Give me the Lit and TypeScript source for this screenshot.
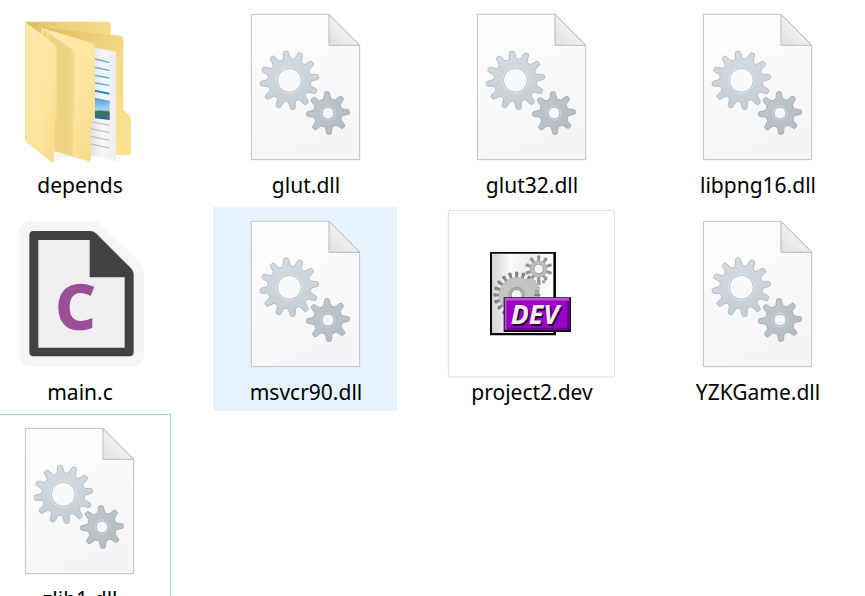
import { LitElement, html, css } from "lit";
import { customElement, property } from "lit/decorators.js";

type Kind = "folder" | "dll" | "c" | "dev";
type Mark = "" | "hover" | "focus";
interface Entry {
  name: string;
  kind: Kind;
  mark?: Mark;
}

const FILES: Entry[] = [
  { name: "depends", kind: "folder" },
  { name: "glut.dll", kind: "dll" },
  { name: "glut32.dll", kind: "dll" },
  { name: "libpng16.dll", kind: "dll" },
  { name: "main.c", kind: "c" },
  { name: "msvcr90.dll", kind: "dll", mark: "hover" },
  { name: "project2.dev", kind: "dev" },
  { name: "YZKGame.dll", kind: "dll" },
  { name: "zlib1.dll", kind: "dll", mark: "focus" },
];

/** Outline of a cog wheel with tapered teeth and a round hole. */
function gear(
  cx: number, cy: number, outer: number, root: number, hole: number,
  teeth: number, start: number, tip = 0.11, base = 0.29,
): string {
  const step = (2 * Math.PI) / teeth;
  const at = (r: number, a: number) =>
    `${(cx + r * Math.cos(a)).toFixed(1)} ${(cy + r * Math.sin(a)).toFixed(1)}`;
  let d = "";
  for (let i = 0; i < teeth; i++) {
    const a = (start * Math.PI) / 180 + i * step;
    d += `${i ? "L" : "M"}${at(root, a - base * step)}`;
    d += `L${at(outer - 4, a - tip * step * 1.3)}`;
    d += `Q${at(outer + 2, a - tip * step)} ${at(outer, a)}`;
    d += `Q${at(outer + 2, a + tip * step)} ${at(outer - 4, a + tip * step * 1.3)}`;
    d += `L${at(root, a + base * step)}`;
    d += `Q${at(root - 4, a + step / 2)} ${at(root, a + (1 - base) * step)}`;
  }
  return `${d}ZM${cx - hole} ${cy}a${hole} ${hole} 0 1 0 ${2 * hole} 0a${hole} ${hole} 0 1 0 ${-2 * hole} 0Z`;
}

const dllIcon = html`<svg viewBox="33 9 504 504" aria-hidden="true">
  <defs>
    <linearGradient id="page" x1="0" y1="0" x2="0.3" y2="1">
      <stop offset="0" stop-color="#fefefe" /><stop offset="1" stop-color="#f4f5f7" />
    </linearGradient>
    <linearGradient id="fold" x1="0" y1="0.8" x2="0.6" y2="0.2">
      <stop offset="0" stop-color="#e2e2e2" /><stop offset="1" stop-color="#f7f7f7" />
    </linearGradient>
    <linearGradient id="big" x1="0.5" y1="0" x2="0.6" y2="1">
      <stop offset="0" stop-color="#d2dbe2" /><stop offset="1" stop-color="#c5ced6" />
    </linearGradient>
    <linearGradient id="small" x1="0" y1="0" x2="1" y2="1">
      <stop offset="0" stop-color="#c1cad1" /><stop offset="1" stop-color="#b0babf" />
    </linearGradient>
  </defs>
  <path d="M124 43H357L449 135V479H124Z" fill="url(#page)" stroke="#c0c1c2" stroke-width="3" />
  <path d="M357 43V136H449Z" fill="url(#fold)" stroke="#b9babb" stroke-width="3" stroke-linejoin="round" />
  <path d=${gear(238, 241, 88, 66, 36, 12, -97, 0.13, 0.3)} fill="url(#big)" fill-rule="evenodd" stroke="#b4bdc4" stroke-width="3" stroke-linejoin="round" />
  <circle cx="238" cy="241" r="39" fill="none" stroke="#e1e7ec" stroke-width="3" />
  <path d=${gear(354, 339, 64, 45, 18, 8, -93, 0.12, 0.28)} fill="url(#small)" fill-rule="evenodd" stroke="#a5b0b6" stroke-width="3" stroke-linejoin="round" />
  <circle cx="354" cy="339" r="21" fill="none" stroke="#d2d9dd" stroke-width="3" />
</svg>`;

const folderIcon = html`<svg viewBox="-15 9 504 504" aria-hidden="true">
  <defs>
    <linearGradient id="back" x1="0" y1="0" x2="1" y2="0.3">
      <stop offset="0" stop-color="#dfbc5e" /><stop offset="0.4" stop-color="#ecd07a" /><stop offset="1" stop-color="#f6dc8a" />
    </linearGradient>
    <linearGradient id="right" x1="0" y1="0" x2="0.8" y2="1">
      <stop offset="0" stop-color="#dfbc5e" /><stop offset="0.5" stop-color="#f3d884" /><stop offset="1" stop-color="#fbe190" />
    </linearGradient>
    <linearGradient id="front" x1="0" y1="0" x2="1" y2="1">
      <stop offset="0" stop-color="#ffeaab" /><stop offset="0.6" stop-color="#fde59f" /><stop offset="1" stop-color="#f8da86" />
    </linearGradient>
    <linearGradient id="shade" x1="0" y1="0" x2="1" y2="0">
      <stop offset="0" stop-color="#ecd27f" /><stop offset="0.85" stop-color="#eed485" /><stop offset="1" stop-color="#f5dd92" />
    </linearGradient>
    <linearGradient id="paper" x1="0" y1="0" x2="1" y2="0">
      <stop offset="0" stop-color="#dedfe2" /><stop offset="0.5" stop-color="#f7f7f8" /><stop offset="1" stop-color="#ededef" />
    </linearGradient>
    <linearGradient id="photo" x1="0" y1="0" x2="0" y2="1">
      <stop offset="0" stop-color="#4d9cd9" /><stop offset="0.55" stop-color="#a9d7ee" /><stop offset="0.65" stop-color="#336b63" /><stop offset="0.8" stop-color="#3f7683" /><stop offset="1" stop-color="#216391" />
    </linearGradient>
  </defs>
  <path d="M76 65H326Q332 65 332 71V200H100Z" fill="url(#back)" />
  <path d="M122 82L363 108Q370 109 370 116V330L388 345Q393 350 393 357V459Q393 467 385 466L270 462Z" fill="url(#right)" />
  <path d="M285 143L348 155V484L270 466Z" fill="url(#paper)" />
  <g fill="none" stroke="#55a9db" stroke-width="4">
    <path d="M285 177L328 187M285 202L328 211M285 226L328 234M285 249L328 256" />
    <path d="M285 272L328 281" stroke-width="6" stroke="#258bc9" />
  </g>
  <path d="M284 293L329 302V360L284 355Z" fill="url(#photo)" />
  <path d="M284 336Q300 325 329 341V348L284 348Z" fill="#3c7165" />
  <path d="M278 366L328 376M274 386L328 398M272 409L328 421M272 432L328 444" fill="none" stroke="#b4b5b8" stroke-width="3" />
  <path d="M163 458L212 468L163 482Z" fill="#f3f3f5" />
  <path d="M121 82L276 129Q285 132 285 141V348Q285 356 278 360Q272 364 272 372V478Q272 486 264 484L163 454V140Z" fill="url(#front)" />
  <path d="M121 82L211 145Q224 153 224 165V340Q224 348 219 354V470L163 454V140Z" fill="url(#shade)" />
  <path d="M123 84L132 87V112L123 106ZM137 90L147 94V122L137 115Z" fill="#f8df90" />
  <path d="M75 65L160 130Q170 138 170 149V356Q170 363 165 368Q162 372 162 380V482Q162 491 154 486L78 426Q75 423 75 418Z" fill="url(#front)" />
  <path d="M77 67V420M88 80V430" fill="none" stroke="#f6dc90" stroke-width="2" />
</svg>`;

const cIcon = html`<svg viewBox="-15 15 504 504" aria-hidden="true">
  <path d="M100 47H274Q291 47 303 59L420 171Q432 183 432 200V443Q432 486 389 486H100Q57 486 57 443V90Q57 47 100 47Z" fill="#f5f5f5" />
  <path d="M101 78H270Q281 78 288 85L393 190Q401 198 401 207V441Q401 454 388 454H101Q88 454 88 441V91Q88 78 101 78Z" fill="#424242" />
  <path d="M115 105H269V217H374V428H115Z" fill="#efeef1" />
  <text class="letter" x="167" y="373">C</text>
</svg>`;

const devIcon = html`<svg viewBox="21 15 504 504" aria-hidden="true">
  <defs>
    <linearGradient id="sheet" x1="0" y1="0" x2="1" y2="0">
      <stop offset="0" stop-color="#d4d4d4" /><stop offset="0.3" stop-color="#fafafa" /><stop offset="0.6" stop-color="#ececec" /><stop offset="1" stop-color="#ffffff" />
    </linearGradient>
    <clipPath id="inside"><path d="M156 147H342V386H156Z" /></clipPath>
  </defs>
  <rect x="25" y="16" width="499" height="500" rx="8" fill="#fff" stroke="#dedede" stroke-width="3" />
  <path d="M150 141H348V391H150Z" fill="#0a0a0a" />
  <path d="M156 146H340V384H156Z" fill="url(#sheet)" />
  <g clip-path="url(#inside)" fill-rule="evenodd">
    <path d=${gear(230, 270, 70, 54, 15, 20, -90, 0.2, 0.22)} fill="#858585" />
    <circle cx="230" cy="270" r="35" fill="none" stroke="#c4c4c4" stroke-width="36" />
    <circle cx="230" cy="270" r="22" fill="none" stroke="#a2a2a2" stroke-width="5" />
    <path d=${gear(296, 192, 41, 27, 13, 10, -90, 0.17, 0.22)} fill="#949494" />
    <circle cx="296" cy="192" r="20" fill="none" stroke="#bcbcbc" stroke-width="11" />
    <path d="M254 226L276 218L302 250L280 262Z" fill="#c0c0c0" />
    <path d="M292 230h10v10h-10ZM306 226h10v9h-10ZM284 255h14v10h-14Z" fill="#a2a2a2" />
  </g>
  <path d="M191 277H393V381H191Z" fill="#170020" />
  <path d="M194 279H388V374H194Z" fill="#c04fdc" />
  <path d="M200 287H388V374H200Z" fill="#64008a" />
  <path d="M200 287H382V368H200Z" fill="#9d00c6" />
  <text class="tag shadow" x="217" y="362">DEV</text>
  <text class="tag" x="212" y="357">DEV</text>
</svg>`;

const ICONS = { folder: folderIcon, dll: dllIcon, c: cIcon, dev: devIcon };

@customElement("file-tile")
export class FileTile extends LitElement {
  @property() name = "";
  @property() kind: Kind = "dll";
  @property() mark: Mark = "";

  static styles = css`
    :host {
      display: block;
    }
    .tile {
      box-sizing: border-box;
      display: flex;
      flex-direction: column;
      align-items: center;
      width: 100%;
      margin: 0;
      padding: 2px 7px 4px;
      border: 1px solid transparent;
      background: none;
      color: #000;
      font: 21px/28px "Noto Sans", "Open Sans", sans-serif;
      text-align: center;
      cursor: default;
    }
    .hover {
      background: #e5f3ff;
    }
    .focus {
      border-color: #99d1ff;
    }
    svg {
      display: block;
      width: 168px;
      height: 168px;
    }
    .label {
      padding-left: 2px;
      white-space: nowrap;
    }
    .letter {
      font: bold 184px "Noto Sans", sans-serif;
      fill: #9b4f96;
      stroke: #9b4f96;
      stroke-width: 5px;
    }
    .tag {
      font: italic bold 80px "Noto Sans", sans-serif;
      fill: #ededed;
    }
    .shadow {
      fill: #2a0038;
    }
  `;

  render() {
    return html`<button type="button" class="tile ${this.mark}">
      ${ICONS[this.kind]}
      <span class="label">${this.name}</span>
    </button>`;
  }
}

@customElement("app-root")
export class AppRoot extends LitElement {
  static styles = css`
    :host {
      display: block;
      height: 100vh;
      overflow-x: hidden;
      overflow-y: auto;
      scrollbar-width: none;
      background: #fff;
    }
    .files {
      display: grid;
      grid-template-columns: repeat(auto-fill, 184px);
      gap: 3px 42px;
      margin: 0 0 0 -13px;
      padding: 0;
      list-style: none;
    }
  `;

  render() {
    return html`<ul class="files">
      ${FILES.map(
        (f) => html`<li>
          <file-tile .name=${f.name} .kind=${f.kind} .mark=${f.mark ?? ""}></file-tile>
        </li>`,
      )}
    </ul>`;
  }
}
